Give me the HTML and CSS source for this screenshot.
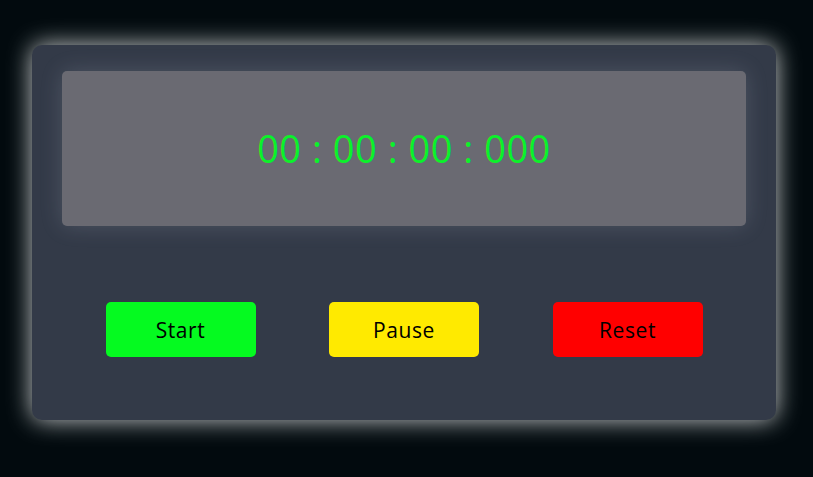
FILE: index.html
```html
<!DOCTYPE html>
<html lang="en">
<head>
<meta charset="utf-8">
<title>Stopwatch</title>
<link rel="stylesheet" href="styles.css">
</head>
<body>
<div class="card">
  <div class="display">
    <span class="time">00 : 00 : 00 : 000</span>
  </div>
  <div class="buttons">
    <button class="btn start">Start</button>
    <button class="btn pause">Pause</button>
    <button class="btn reset">Reset</button>
  </div>
</div>
</body>
</html>
```
FILE: styles.css
```css
html, body {
  margin: 0;
  padding: 0;
}
body {
  background: #020a0e;
  width: 813px;
  height: 477px;
  overflow: hidden;
  font-family: "Open Sans", "DejaVu Sans", sans-serif;
}
.card {
  box-sizing: border-box;
  margin: 45px 0 0 32px;
  width: 744px;
  height: 375px;
  background: #333a48;
  border-radius: 10px;
  box-shadow: 0 0 24px rgba(235, 238, 240, 0.85);
  padding: 26px 30px 0;
}
.display {
  height: 155px;
  background: #6a6a72;
  border-radius: 5px;
  box-shadow: 0 0 22px rgba(200, 210, 230, 0.18);
  display: flex;
  align-items: center;
  justify-content: center;
}
.time {
  color: #0af22a;
  font-size: 38px;
  letter-spacing: 0.5px;
  margin-top: -2px;
}
.buttons {
  margin: 76px -30px 0;
  display: flex;
  justify-content: space-evenly;
}
.btn {
  width: 150px;
  height: 55px;
  border: none;
  border-radius: 5px;
  font-family: "Open Sans", "DejaVu Sans", sans-serif;
  font-size: 21px;
  letter-spacing: 0.6px;
  color: #000;
  padding: 0;
}
.start { background: #05fa20; }
.pause { background: #ffea00; }
.reset { background: #ff0000; }
```
